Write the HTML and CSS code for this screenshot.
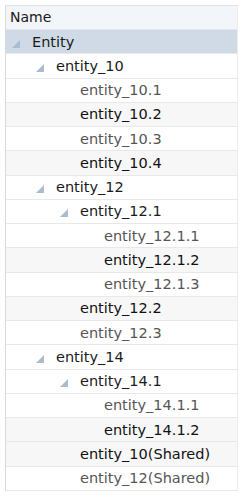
FILE: index.html
```html
<!DOCTYPE html>
<html lang="en">
<head>
  <meta charset="UTF-8">
  <title>Entity</title>
  <link rel="stylesheet" href="styles.css">
</head>
<body>
  <div class="tree">
    <div class="tree-head">Name</div>

    <div class="row lvl-0 current"><svg class="twisty" viewBox="0 0 8 8"><polygon points="8,0 8,8 0,8"/></svg>Entity</div>
    <div class="row lvl-1"><svg class="twisty" viewBox="0 0 8 8"><polygon points="8,0 8,8 0,8"/></svg>entity_10</div>
    <div class="row lvl-2 leaf dim">entity_10.1</div>
    <div class="row lvl-2 leaf alt">entity_10.2</div>
    <div class="row lvl-2 leaf dim">entity_10.3</div>
    <div class="row lvl-2 leaf alt">entity_10.4</div>
    <div class="row lvl-1"><svg class="twisty" viewBox="0 0 8 8"><polygon points="8,0 8,8 0,8"/></svg>entity_12</div>
    <div class="row lvl-2"><svg class="twisty" viewBox="0 0 8 8"><polygon points="8,0 8,8 0,8"/></svg>entity_12.1</div>
    <div class="row lvl-3 leaf dim">entity_12.1.1</div>
    <div class="row lvl-3 leaf alt">entity_12.1.2</div>
    <div class="row lvl-3 leaf dim">entity_12.1.3</div>
    <div class="row lvl-2 leaf alt">entity_12.2</div>
    <div class="row lvl-2 leaf dim">entity_12.3</div>
    <div class="row lvl-1"><svg class="twisty" viewBox="0 0 8 8"><polygon points="8,0 8,8 0,8"/></svg>entity_14</div>
    <div class="row lvl-2"><svg class="twisty" viewBox="0 0 8 8"><polygon points="8,0 8,8 0,8"/></svg>entity_14.1</div>
    <div class="row lvl-3 leaf dim">entity_14.1.1</div>
    <div class="row lvl-3 leaf alt">entity_14.1.2</div>
    <div class="row lvl-2 leaf alt">entity_10(Shared)</div>
    <div class="row lvl-2 leaf dim">entity_12(Shared)</div>
  </div>
</body>
</html>
```

FILE: styles.css
```css
body {
  margin: 0;
  background: #fff;
  font-family: 'DejaVu Sans', Tahoma, sans-serif;
}

.tree {
  margin: 5px 0 0 5px;
  width: 231px;
  border-left: 1px solid #d9d9d9;
  border-top: 1px solid #e2e2e2;
  border-right: 1px solid #ececec;
}

.tree-head {
  height: 23px;
  line-height: 23px;
  padding-left: 4px;
  font-size: 14px;
  color: #1a1a1a;
  background-color: #f2f5f9;
  border-bottom: 1px solid #e4e6ea;
}

.row {
  display: flex;
  align-items: center;
  height: 23.25px;
  font-size: 14.5px;
  color: #1a1a1a;
  border-bottom: 1px solid #e8e8e8;
  white-space: nowrap;
}

.row.current {
  background-color: #cfdae6;
}

.row.alt {
  background-color: #f7f7f7;
  color: #111;
}

.row.dim {
  color: #555;
}

.twisty {
  width: 8px;
  height: 8px;
  margin: 4px 12px 0 0;
  fill: #aabccd;
  flex-shrink: 0;
}

.lvl-0 { padding-left: 6px; }
.lvl-1 { padding-left: 30px; }
.lvl-2 { padding-left: 54px; }
.lvl-3 { padding-left: 78px; }

.leaf.lvl-2 { padding-left: 74px; }
.leaf.lvl-3 { padding-left: 98px; }
```
